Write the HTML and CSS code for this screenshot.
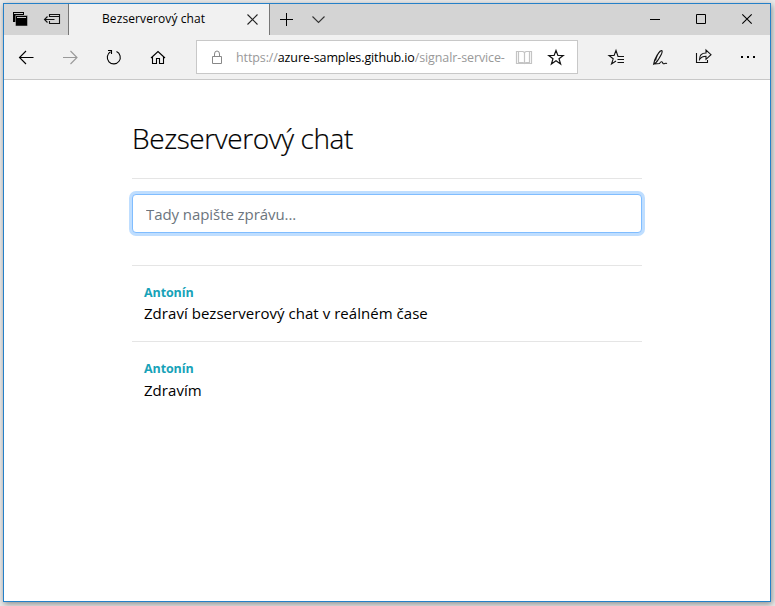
FILE: index.html
```
<!DOCTYPE html>
<html lang="cs">
<head>
<meta charset="utf-8">
<title>Bezserverový chat</title>
<link rel="stylesheet" href="styles.css">
</head>
<body>
<div class="window">
  <header class="tabs">
    <div class="tab-tools">
      <svg width="64" height="31" viewBox="4 4 64 31">
        <path d="M13 12h11v3H16v7h-3z" fill="#000"/><path d="M14 13.500h9" stroke="#ccc"/>
        <path d="M15.500 15.500h12V26h-12z" fill="#000" stroke="#ccc" stroke-width=".5"/><path d="M17 17.500h9" stroke="#ccc"/>
        <path d="M49.500 17v-2.500h10v9h-10V21M49.500 16.500h10M44.500 19.500h10M47.500 16.500l-3 3 3 3" fill="none" stroke="#111" stroke-width="1.100"/>
      </svg>
    </div>
    <div class="tab"><span class="tab-title">Bezserverový chat</span>
      <svg class="tab-close" width="11" height="11" viewBox="0 0 11 11"><path d="M.5.5l10 10M10.500.5l-10 10" stroke="#222" stroke-width="1.100"/></svg>
    </div>
    <svg class="new-tab" width="60" height="31" viewBox="270 4 60 31"><path d="M280 19.500h13M286.500 13v13" stroke="#000" fill="none"/><path d="M312.500 16.500l6 6 6-6" stroke="#333" fill="none" stroke-width="1.100"/></svg>
    <svg class="controls" width="120" height="31" viewBox="650 4 120 31" fill="none" stroke="#000"><path d="M650 19.500h10"/><path d="M696.500 14.500h9v9h-9z"/><path d="M742.300 14.300l9.400 9.400M751.700 14.300l-9.400 9.400" stroke-width="1.100"/></svg>
  </header>
  <nav class="toolbar">
    <svg width="192" height="44" viewBox="4 35 192 44" fill="none" stroke="#000" stroke-width="1.100">
      <path d="M19.500 57.500h14M26 51l-6.500 6.500L26 64"/>
      <path d="M63 57.500h14M70.500 51l6.500 6.500-6.500 6.500" stroke="#999"/>
      <path d="M110.500 51.800A6.500 6.500 0 1 0 116.500 51.500M108 50.500h3.500V54"/>
      <path d="M151 58l7-6.500 7 6.500M152.500 57v6.500h4V58.500h3v5h4V57"/>
    </svg>
    <div class="address">
      <svg class="lock" width="12" height="14" viewBox="0 0 12 14" fill="none" stroke="#888"><path d="M1.500 6.500h9v7h-9zM3.500 6.500V4a2.500 3 0 0 1 5 0v2.500"/></svg>
      <div class="url">https://<span class="host">azure-samples.github.io</span>/signalr-service-</div>
      <svg class="page-icons" width="62" height="32" viewBox="515 41 62 32" fill="none">
        <path d="M516.500 51.500h6.500l1.500 1 1.500-1h5.500v12h-15zM518.500 51.500v11h4.500l1.500 1 1.500-1h3.500v-11M524.500 52.500v11" stroke="#c4c4c4" stroke-width="1.200"/>
        <path d="M556 50.500l1.900 5h5.300l-4.200 3.300 1.600 5.200-4.600-3.200-4.600 3.200 1.600-5.200-4.200-3.300h5.300z" stroke="#111" stroke-width="1.200"/>
      </svg>
    </div>
    <svg class="actions" width="192" height="44" viewBox="578 35 192 44" fill="none" stroke="#111" stroke-width="1.100">
      <path d="M624 56.500h-6l-2-6-1.900 5H609l4.200 3.300-1.700 5.200 4.500-3M617.500 59.500h6.500M617.500 62.500h6.500"/>
      <path d="M655.500 60.500c1-4 3-8 5-9.500 2-1.200 2 .8 1 3-1.500 3-3.500 6.500-5.500 8.500l-2.300 1.500 1-4c1.300-3 3.500-7 5.300-9M654 64l5.500-.5c2-3 3-1.500 3.500 0 1.500 1 2-1 4 0"/>
      <path d="M696.500 53v9.500h11V60M699.500 59.500c0-4.500 2-6.500 6.500-6.500v-3l5 4.700-5 4.600v-3c-3 0-5 1-6.500 3.200z"/>
      <path d="M741 57h2M747 57h2M753 57h2" stroke="#000" stroke-width="2"/>
    </svg>
  </nav>
  <main class="page">
    <h1><span>Bezserverový chat</span></h1>
    <input class="message-input" type="text" placeholder="Tady napište zprávu...">
    <section class="messages">
      <article class="message"><div class="author"><span>Antonín</span></div><div class="text"><span>Zdraví bezserverový chat v reálném čase</span></div></article>
      <article class="message"><div class="author"><span>Antonín</span></div><div class="text"><span>Zdravím</span></div></article>
    </section>
  </main>
</div>
</body>
</html>
```
FILE: styles.css
```
* { box-sizing: border-box; }
body { margin: 0; padding: 3px 4px 4px 3px; height: 606px; overflow: hidden; background: #e9e9e9; font-family: "Open Sans", "Noto Sans", sans-serif; color: #000; }
svg { display: block; flex: none; }
.window { width: 768px; height: 599px; border: 1px solid #2580c8; background: #fff; box-shadow: 1px 2px 6px rgba(0,0,0,.4); }
.tabs { display: flex; height: 31px; background: #d4d4d4; }
.tab-tools { width: 65px; border-right: 1px solid #777; }
.tab { display: flex; align-items: center; width: 201px; padding: 0 11px 0 33px; border-right: 1px solid #777; background: #f1f1f1; justify-content: space-between; }
.tab-title { margin-bottom: 2px; font-size: 12px; line-height: 16px; letter-spacing: .1px; white-space: nowrap; }
.controls { margin-left: auto; }
.toolbar { display: flex; align-items: center; height: 45px; background: #f1f1f1; border-bottom: 1px solid #c8c8c8; }
.address { display: flex; align-items: center; width: 382px; height: 34px; border: 1px solid #c8c8c8; background: #fff; }
.lock { margin-left: 14px; }
.url { width: 270px; margin-left: 13px; margin-top: 1px; overflow: hidden; white-space: nowrap; font-size: 12.500px; line-height: 20px; letter-spacing: -.11px; color: #999; }
.host { color: #000; }
.page-icons { margin-left: auto; }
.page { width: 510px; margin-left: 128px; padding-top: 39px; }
h1 { margin: 0 0 15px; height: 60px; border-bottom: 1px solid #e5e5e5; font-size: 28px; line-height: 38px; font-weight: 300; letter-spacing: -.4px; white-space: nowrap; -webkit-text-stroke: .2px #000; }
.message-input { display: block; width: 510px; height: 39px; padding: 0 13px; border: 1px solid #80bdff; border-radius: 4px; box-shadow: 0 0 0 3px #bfdeff; outline: 0; font: 15px/24px "Open Sans", sans-serif; letter-spacing: -.07px; background: #fff; }
.message-input::placeholder { color: #6c757d; opacity: 1; }
.messages { margin-top: 32px; }
.message { height: 76px; padding: 17px 12px 0; border-top: 1px solid #e5e5e5; }
.author { font-size: 12.500px; line-height: 20px; font-weight: 700; letter-spacing: -.1px; color: #17a2b8; }
.text { margin-top: -2px; font-size: 15px; line-height: 24px; letter-spacing: .04px; white-space: nowrap; }
.message + .message .text { margin-top: -1px; }
```
